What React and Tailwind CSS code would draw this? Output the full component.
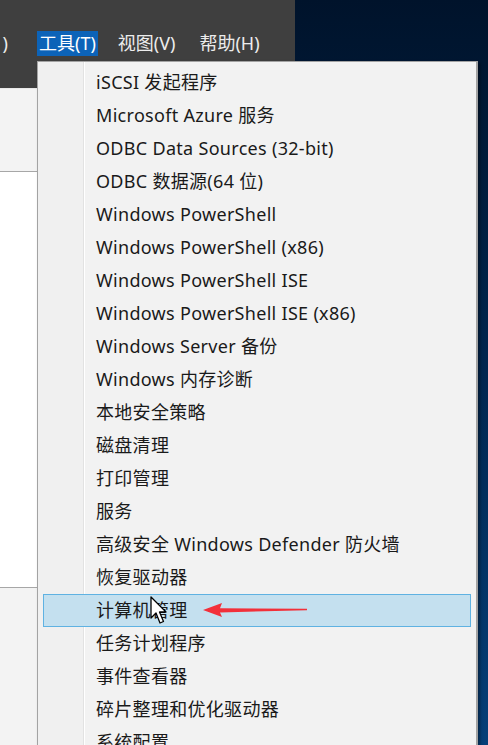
import React from "react";

const items = [
  "iSCSI 发起程序",
  "Microsoft Azure 服务",
  "ODBC Data Sources (32-bit)",
  "ODBC 数据源(64 位)",
  "Windows PowerShell",
  "Windows PowerShell (x86)",
  "Windows PowerShell ISE",
  "Windows PowerShell ISE (x86)",
  "Windows Server 备份",
  "Windows 内存诊断",
  "本地安全策略",
  "磁盘清理",
  "打印管理",
  "服务",
  "高级安全 Windows Defender 防火墙",
  "恢复驱动器",
  "计算机管理",
  "任务计划程序",
  "事件查看器",
  "碎片整理和优化驱动器",
  "系统配置",
];

const Cursor = () => (
  <svg width="22" height="30" viewBox="0 0 22 30" className="absolute left-[150px] top-[596px]">
    <path d="M1 1 L1 22 L6 17 L10 27 L13.5 25.5 L9.5 16 L16 16 Z" fill="#fff" stroke="#000" strokeWidth="1.3" strokeLinejoin="round" />
  </svg>
);

const RedArrow = () => (
  <svg width="112" height="20" viewBox="0 0 112 20" className="absolute left-[200px] top-[600px]">
    <path d="M3 10 L22 3 L20 8.3 L107 8.8 L107 10.2 L20 12.5 L22 17 Z" fill="#f2303a" />
  </svg>
);

export default function App() {
  return (
    <div className="relative w-[488px] h-[745px] overflow-hidden bg-gradient-to-b from-[#00132b] via-[#012650] to-[#063f78] font-['Noto_Sans','Noto_Sans_CJK_SC',sans-serif]">
      {/* window behind the menu */}
      <div className="w-[295px] h-full flex flex-col">
        <div className="h-[88px] bg-[#3f3f3f] flex items-start pt-[31px] text-[18px] text-[#ececec] leading-[25px] whitespace-nowrap">
          <span className="w-[37px] shrink-0 flex justify-end pr-[29px]">)</span>
          <span className="px-[2px] bg-[#0c63b8] text-white">工具(T)</span>
          <span className="ml-[20px]">视图(V)</span>
          <span className="ml-[24px]">帮助(H)</span>
        </div>
        <div className="h-[84px] bg-[#f3f3f3] border-t border-[#e8e8e8] border-b border-b-[#a7a7a7]" />
        <div className="h-[416px] bg-white border-b border-[#a7a7a7]" />
        <div className="flex-1 bg-[#f3f3f3]" />
      </div>

      {/* tools dropdown menu */}
      <div className="absolute left-[37px] top-[61px] w-[441px] bottom-0 bg-[#f2f2f2] border-l border-t border-r-2 border-[#a3a3a3] shadow-[2px_2px_3px_rgba(0,0,0,0.4)]">
        <div className="absolute left-0 top-0 bottom-0 w-[46px] bg-[#f0f0f0] border-r border-[#e2e2e2]">
          <div className="absolute right-[-2px] top-0 bottom-0 w-px bg-white" />
        </div>
        <div className="relative flex flex-col pt-[4px] px-[5px]">
          {items.map((t, i) =>
            i === 16 ? (
              <div key={t} className="h-[33px] flex items-center pl-[52px] bg-[#c4e0ef] border border-[#5fb2e2] text-[18px] tracking-[0.3px] text-[#1a1a1a] whitespace-nowrap">
                {t}
              </div>
            ) : (
              <div key={t} className="h-[33px] flex items-center pl-[53px] text-[18px] tracking-[0.3px] text-[#1a1a1a] whitespace-nowrap">
                {t}
              </div>
            )
          )}
        </div>
      </div>

      <RedArrow />
      <Cursor />
    </div>
  );
}
